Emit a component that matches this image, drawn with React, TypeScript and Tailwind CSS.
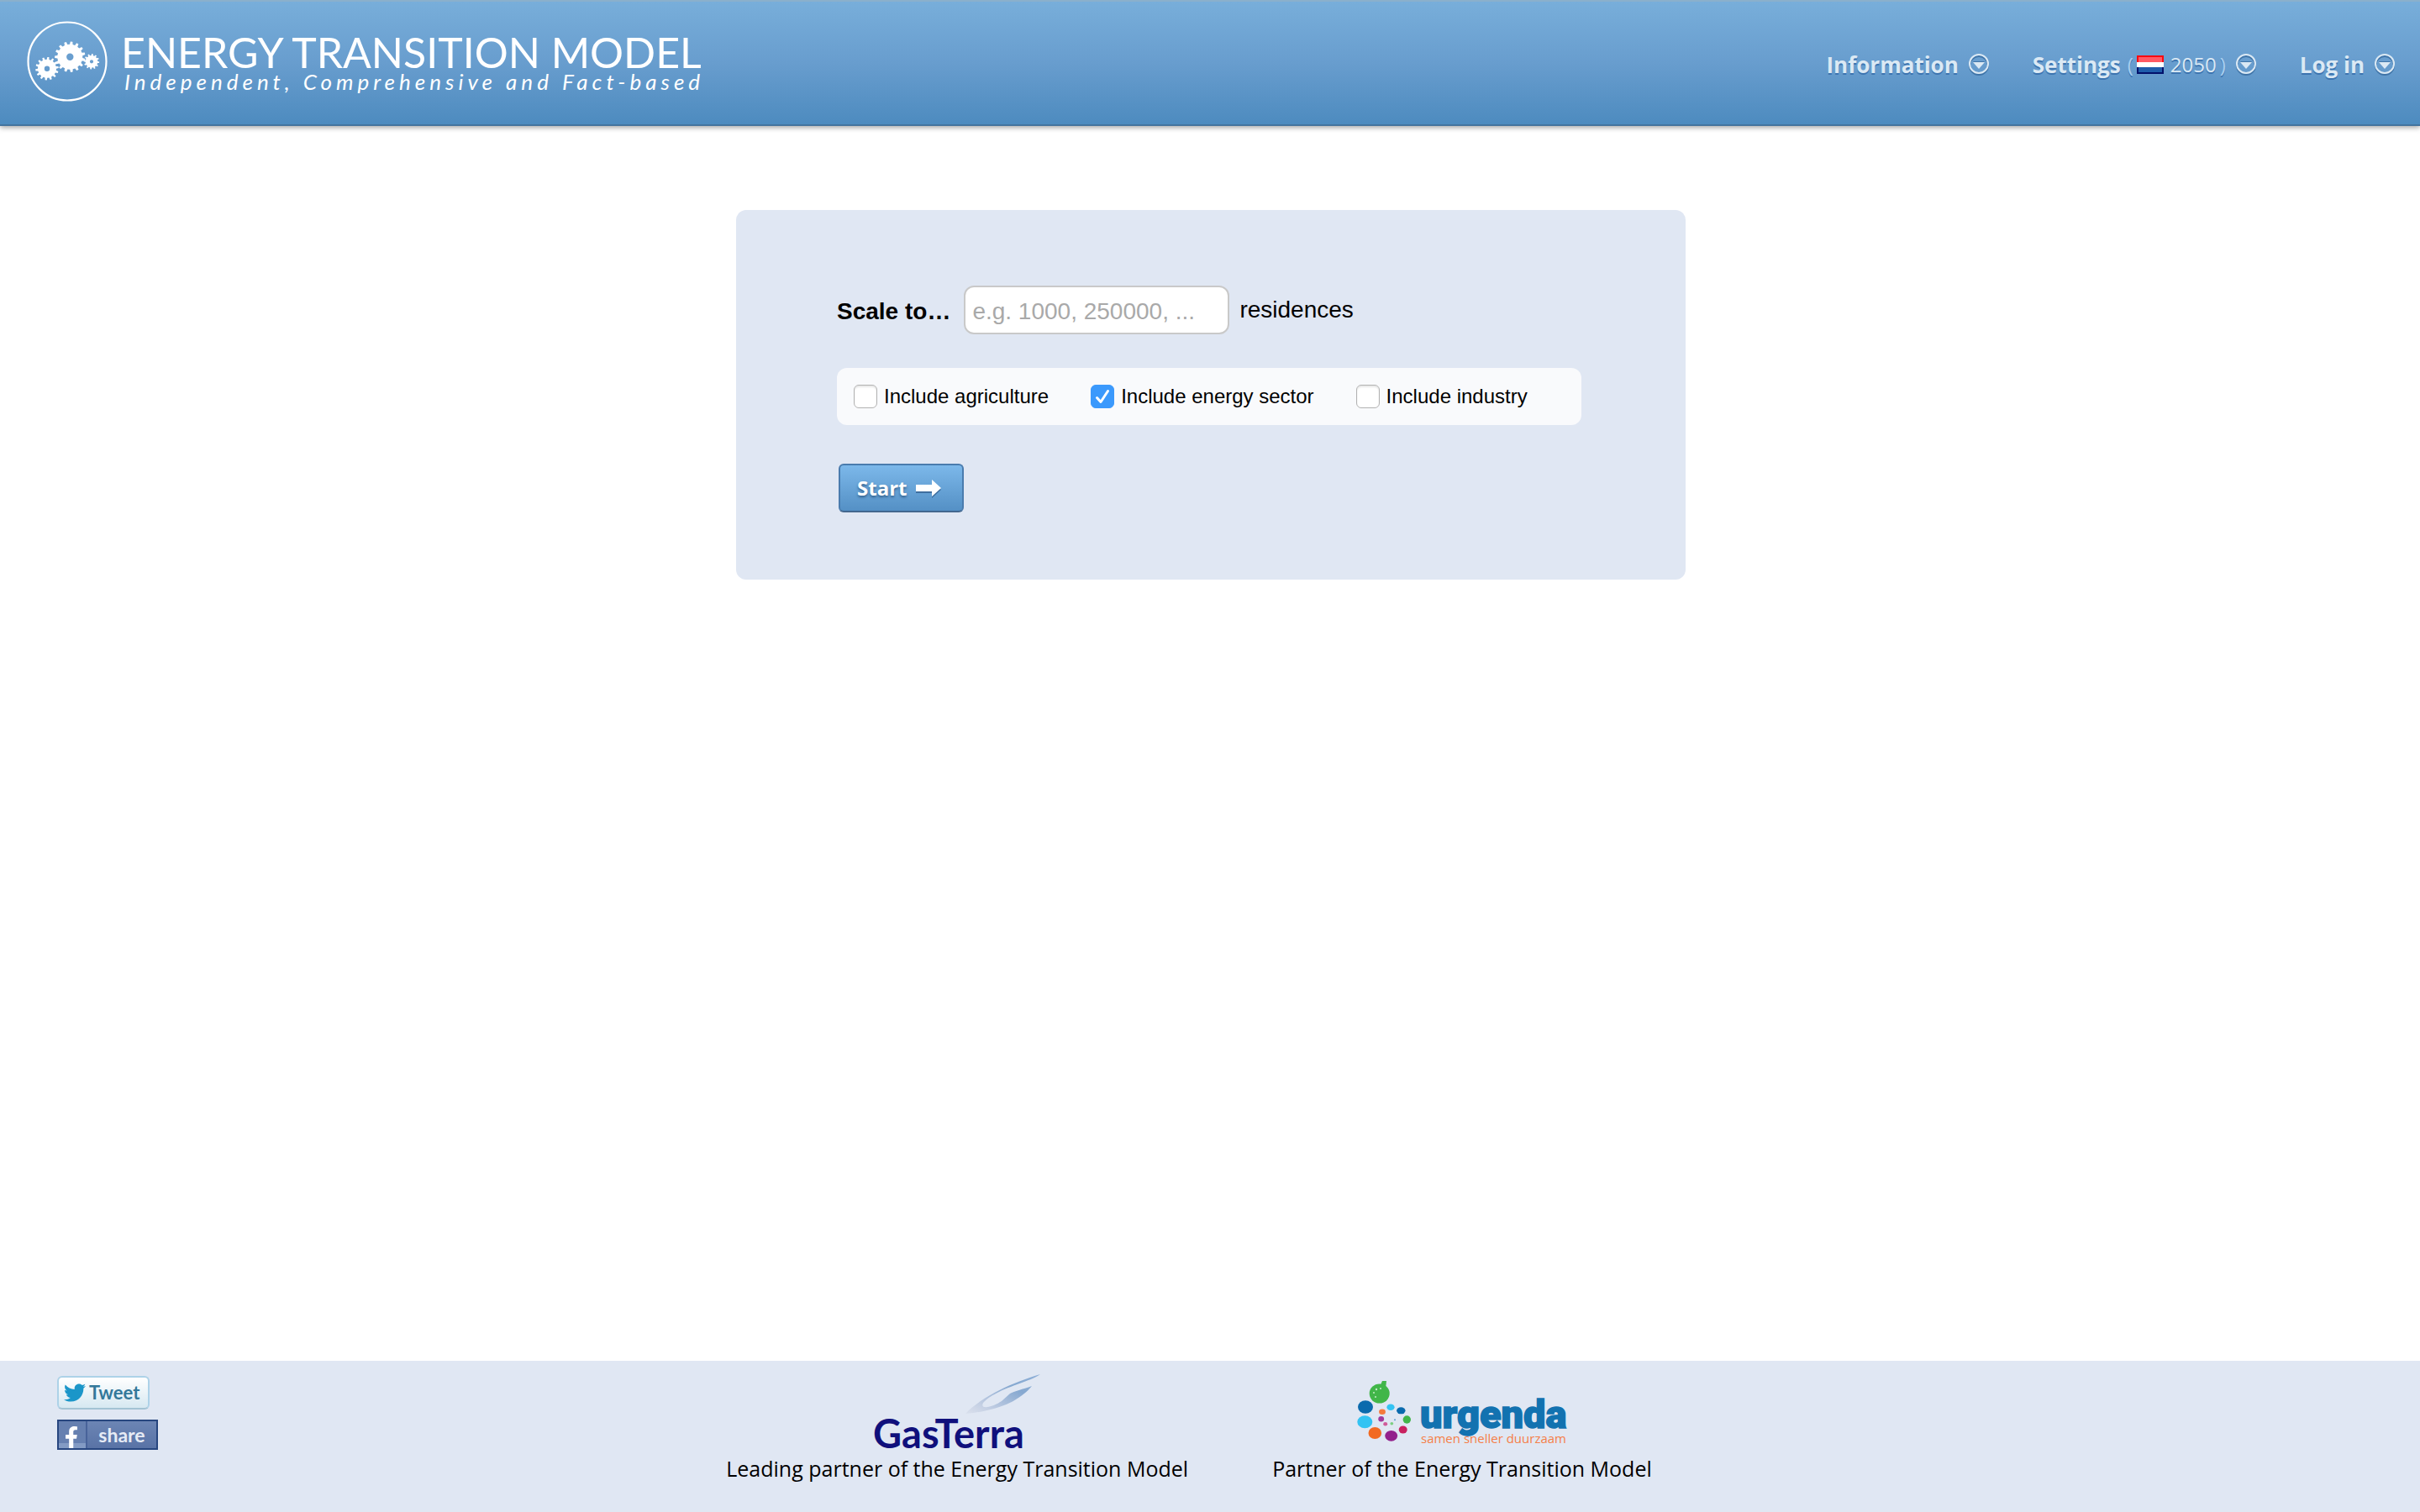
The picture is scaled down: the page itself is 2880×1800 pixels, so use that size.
import { useState } from "react";
import { FaFacebookF, FaTwitter } from "react-icons/fa";

function gearPath(cx: number, cy: number, outer: number, inner: number, hole: number, teeth: number) {
  const step = (Math.PI * 2) / teeth;
  const at = (r: number, a: number) => `${(cx + r * Math.cos(a)).toFixed(2)} ${(cy + r * Math.sin(a)).toFixed(2)}`;
  const points: string[] = [];
  for (let i = 0; i < teeth; i++) {
    const a = i * step - Math.PI / 2 + 0.1;
    points.push(at(inner, a - step * 0.28), at(outer, a - step * 0.17), at(outer, a + step * 0.17), at(inner, a + step * 0.28));
  }
  return `M${points.join("L")}ZM${cx - hole} ${cy}a${hole} ${hole} 0 1 0 ${hole * 2} 0a${hole} ${hole} 0 1 0 ${-hole * 2} 0Z`;
}

function GearsLogo() {
  return (
    <svg viewBox="0 0 96 96" className="size-24 shrink-0" aria-hidden="true">
      <circle cx="48" cy="48" r="46.5" fill="none" stroke="#fff" strokeWidth="2.2" />
      <g fill="#fff" fillRule="evenodd">
        <path d={gearPath(51.3, 42.7, 18.2, 15, 4.2, 15)} />
        <path d={gearPath(24, 56.7, 13.8, 11, 3.2, 14)} />
        <path d={gearPath(77, 48.3, 9.2, 7.3, 2.1, 12)} />
      </g>
    </svg>
  );
}

function CircleArrow() {
  return (
    <svg viewBox="0 0 24 26" className="h-[26px] w-6 shrink-0" aria-hidden="true">
      <circle cx="12" cy="14" r="11" fill="none" stroke="#3f74a8" strokeWidth="2" />
      <circle cx="12" cy="12" r="11" fill="none" stroke="#dbe9f4" strokeWidth="2" />
      <path d="M5 9h14l-7 8z" fill="#3f74a8" />
      <path d="M5 10h14l-7 8z" fill="#dbe9f4" />
    </svg>
  );
}

function DutchFlag() {
  return (
    <svg viewBox="0 0 32 22" className="h-[22px] w-8 shrink-0" role="img" aria-label="Netherlands">
      <rect width="32" height="8" fill="#f90a10" />
      <rect x="2" y="2" width="28" height="6" fill="#ff5a64" />
      <rect y="8" width="32" height="6" fill="#fff" />
      <rect y="14" width="32" height="8" fill="#02116b" />
      <rect x="2" y="14" width="28" height="6" fill="#1f5cab" />
    </svg>
  );
}

function GasTerraLogo() {
  return (
    <svg viewBox="0 0 200 90" className="h-[90px] w-[200px] overflow-visible" role="img" aria-label="GasTerra">
      <defs>
        <linearGradient id="swoosh" x1="0" y1="1" x2="1" y2="0">
          <stop offset="0" stopColor="#c9cfe0" stopOpacity="0.3" />
          <stop offset="0.3" stopColor="#b9c8e0" />
          <stop offset="0.65" stopColor="#86a8d0" />
          <stop offset="1" stopColor="#8fb0d8" />
        </linearGradient>
      </defs>
      <path
        d="M199 0C168 9 130 26 110 47C135 45 158 38 170 30C180 24 186 18 189 14C178 18 168 20 163 23L153 32C147 36 138 40 132 39C127 36 134 29 150 21C168 12 190 7 199 0Z"
        fill="url(#swoosh)"
      />
      <text x="0" y="88" fill="#10107c" className="font-['Lato',sans-serif] text-[47px] font-bold">
        GasTerra
      </text>
    </svg>
  );
}

const dots: [number, number, number, number, string][] = [
  [26.7, 23, 12, 11.5, "#41b649"],
  [10, 39, 9, 7.7, "#0a6aad"],
  [9.3, 56.7, 9, 7.5, "#33c3f3"],
  [21.3, 70, 7.8, 7, "#f26a22"],
  [40.7, 73.3, 7.4, 6.4, "#93218c"],
  [54.7, 66, 5, 4.5, "#c8215f"],
  [59.3, 54, 4.7, 4.7, "#41b649"],
  [52.3, 43.3, 5.2, 4, "#0a6aad"],
  [40, 39.3, 4.6, 3.8, "#33c3f3"],
  [30, 44.7, 3.9, 3.3, "#f47a3c"],
  [28.7, 53.3, 3.4, 3.2, "#a03a9c"],
  [33.7, 59.3, 2.5, 2.3, "#d05a9a"],
  [41.3, 58.7, 1.9, 1.8, "#7cce82"],
  [45, 54.3, 1, 1, "#5b9cd0"],
];

function UrgendaLogo() {
  return (
    <svg
      viewBox="0 0 250 90"
      className="h-[90px] w-[250px] overflow-visible"
      role="img"
      aria-label="Urgenda, samen sneller duurzaam"
    >
      <path d="M27 15L30 8H35L34 17Z" fill="#41b649" />
      {dots.map(([cx, cy, rx, ry, fill]) => (
        <ellipse key={`${cx}-${cy}`} cx={cx} cy={cy} rx={rx} ry={ry} fill={fill} />
      ))}
      <g fill="#c4ebc4">
        <circle cx="20" cy="22" r="1" />
        <circle cx="23" cy="18" r="1.2" />
        <circle cx="28" cy="17" r="1" />
        <circle cx="22" cy="27" r="1" />
      </g>
      <text x="75" y="64" fill="#1272b0" stroke="#1272b0" strokeWidth="1.5" className="font-['Roboto',sans-serif] text-[47px] font-black">
        urgenda
      </text>
      <text x="76" y="82" fill="#f57f48" className="font-['Open_Sans',sans-serif] text-[15px]">
        samen sneller duurzaam
      </text>
    </svg>
  );
}

function CheckOption({ id, label, initial = false }: { id: string; label: string; initial?: boolean }) {
  const [on, setOn] = useState(initial);
  return (
    <div className="flex items-center gap-2">
      <span className="relative flex size-7">
        <input
          id={id}
          type="checkbox"
          checked={on}
          onChange={(e) => setOn(e.target.checked)}
          className="size-7 appearance-none rounded-md border border-[#b2b2b2] bg-white shadow-[inset_0_2px_2px_#e8e8e8] checked:border-[#3b99fc] checked:bg-[#3b99fc] checked:shadow-none"
        />
        {on && (
          <svg viewBox="0 0 28 28" className="pointer-events-none absolute inset-0" aria-hidden="true">
            <path d="M7.500 15.500L12 20.500L20.500 7.500" fill="none" stroke="#fff" strokeWidth="3" strokeLinecap="round" strokeLinejoin="round" />
          </svg>
        )}
      </span>
      <label htmlFor={id} className="text-2xl leading-7">
        {label}
      </label>
    </div>
  );
}

const navButton =
  "flex cursor-pointer items-center gap-3 text-[26px] leading-8 font-bold text-[#dbe9f4] [text-shadow:0_2px_0_#3c74b0]";

export default function App() {
  const [amount, setAmount] = useState("");
  return (
    <div className="flex min-h-screen flex-col bg-white font-['Open_Sans',sans-serif] text-black">
      <header className="flex h-[150px] items-center justify-between border-t-2 border-b-2 border-t-[#8ab0cc] border-b-[#44749f] bg-linear-to-b from-[#78aeda] via-[#689dce] to-[#4d8bbf] pr-[30px] pb-1 pl-8 shadow-[0_2px_6px_rgba(0,0,0,0.35)]">
        <a href="#home" className="flex items-center gap-4 font-['Lato',sans-serif] text-white">
          <GearsLogo />
          <span className="flex flex-col pt-0.5 whitespace-nowrap">
            <span className="text-[50px] leading-[46px]">ENERGY TRANSITION MODEL</span>
            <span className="pl-1 text-[26px] leading-6 tracking-[5px] italic">Independent, Comprehensive and Fact-based</span>
          </span>
        </a>
        <nav className="flex items-center gap-[52px] pt-2">
          <button type="button" className={navButton}>
            Information
            <CircleArrow />
          </button>
          <button type="button" className={navButton}>
            <span className="flex items-center gap-2">
              Settings
              <span className="flex items-center text-2xl leading-8 font-normal">
                <span className="pr-1 text-[#a8cff0]">(</span>
                <DutchFlag />
                <span className="pl-2">2050</span>
                <span className="pl-1 text-[#a8cff0]">)</span>
              </span>
            </span>
            <CircleArrow />
          </button>
          <button type="button" className={navButton}>
            Log in
            <CircleArrow />
          </button>
        </nav>
      </header>

      <main className="grow pt-[100px] pl-0.5 font-['Liberation_Sans',sans-serif]">
        <form
          onSubmit={(e) => e.preventDefault()}
          className="mx-auto max-w-[1130px] rounded-xl bg-[#e0e7f3] px-[120px] pt-[90px] pb-20"
        >
          <div className="flex items-center text-[28px] leading-8">
            <label htmlFor="scale" className="pt-1 pr-4 font-bold">
              Scale to…
            </label>
            <input
              id="scale"
              type="text"
              value={amount}
              onChange={(e) => setAmount(e.target.value)}
              placeholder="e.g. 1000, 250000, ..."
              className="h-[58px] w-[316px] rounded-xl border-2 border-[#c9c9c9] bg-white px-2 pt-1 placeholder:text-[#a9a9a9]"
            />
            <span className="pl-3">residences</span>
          </div>
          <div className="mt-10 mr-1 flex items-center gap-[50px] rounded-xl bg-[#f9fafc] p-5">
            <CheckOption id="agriculture" label="Include agriculture" />
            <CheckOption id="energy" label="Include energy sector" initial />
            <CheckOption id="industry" label="Include industry" />
          </div>
          <button
            type="submit"
            className="mt-[46px] ml-0.5 flex h-[58px] cursor-pointer items-center gap-2.5 rounded-md border-2 border-[#4a7cae] border-b-[#43678e] bg-linear-to-b from-[#7cb8ea] to-[#5490c5] pr-6 pl-5 font-['Open_Sans',sans-serif] text-2xl font-bold text-white [text-shadow:0_2px_3px_#33608c]"
          >
            Start
            <svg viewBox="0 0 32 24" className="h-6 w-8" aria-hidden="true">
              <path d="M1 9H20V4L31 14L20 24V18H1Z" fill="#3f6f9f" />
              <path d="M1 8H20V2L31 12L20 22V16H1Z" fill="#fff" />
            </svg>
          </button>
        </form>
      </main>

      <footer className="grid h-[180px] grid-cols-[1fr_auto_1fr] items-start bg-[#e0e7f3] pt-4 pr-[118px] pl-[68px]">
        <div className="flex flex-col items-start gap-3 pt-0.5 font-['Lato',sans-serif] font-bold">
          <a
            href="#tweet"
            className="flex h-10 w-[110px] items-center gap-1 rounded-md border-2 border-[#add2e8] border-b-[#a3c3d4] bg-linear-to-b from-white to-[#d6e8f1] pl-1.5 text-[22px] leading-6 text-[#33789a]"
          >
            <FaTwitter className="size-[26px] text-[#1b96c9]" aria-hidden="true" />
            Tweet
          </a>
          <a
            href="#share"
            className="flex h-9 w-[120px] items-stretch border-2 border-[#27467f] bg-linear-to-b from-[#6c85b4] to-[#5973a6] text-[23px] leading-8 text-[#e6ebf5]"
          >
            <span className="flex w-[34px] items-end justify-end border-r-2 border-[#48639a] bg-linear-to-b from-[#6680b0] from-80% to-[#839bc4] to-80% pr-1">
              <FaFacebookF className="size-[26px] text-white" aria-hidden="true" />
            </span>
            <span className="grow text-center">share</span>
          </a>
        </div>
        <div className="flex items-start gap-[100px] text-[25px] leading-8 whitespace-nowrap">
          <a href="#gasterra" className="flex flex-col items-center gap-1.5">
            <GasTerraLogo />
            Leading partner of the Energy Transition Model
          </a>
          <a href="#urgenda" className="flex flex-col items-center gap-1.5">
            <UrgendaLogo />
            Partner of the Energy Transition Model
          </a>
        </div>
      </footer>
    </div>
  );
}
